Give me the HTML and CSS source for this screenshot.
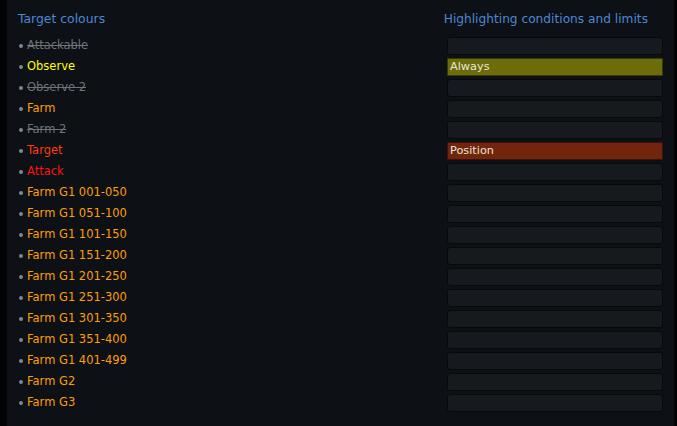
FILE: index.html
```html
<!DOCTYPE html>
<html>
<head>
<meta charset="utf-8">
<link rel="stylesheet" href="styles.css">
</head>
<body>
<div class="frame">
  <div class="panel">
    <div class="head">
      <div class="title">Target colours</div>
      <div class="title right">Highlighting conditions and limits</div>
    </div>
    <div class="rows">
      <div class="row"><span class="item off">Attackable</span><div class="box"></div></div>
      <div class="row"><span class="item c-observe">Observe</span><div class="box olive">Always</div></div>
      <div class="row"><span class="item off">Observe 2</span><div class="box"></div></div>
      <div class="row"><span class="item c-farm">Farm</span><div class="box"></div></div>
      <div class="row"><span class="item off">Farm 2</span><div class="box"></div></div>
      <div class="row"><span class="item c-target">Target</span><div class="box rust">Position</div></div>
      <div class="row"><span class="item c-attack">Attack</span><div class="box"></div></div>
      <div class="row"><span class="item c-farm">Farm G1 001-050</span><div class="box"></div></div>
      <div class="row"><span class="item c-farm">Farm G1 051-100</span><div class="box"></div></div>
      <div class="row"><span class="item c-farm">Farm G1 101-150</span><div class="box"></div></div>
      <div class="row"><span class="item c-farm">Farm G1 151-200</span><div class="box"></div></div>
      <div class="row"><span class="item c-farm">Farm G1 201-250</span><div class="box"></div></div>
      <div class="row"><span class="item c-farm">Farm G1 251-300</span><div class="box"></div></div>
      <div class="row"><span class="item c-farm">Farm G1 301-350</span><div class="box"></div></div>
      <div class="row"><span class="item c-farm">Farm G1 351-400</span><div class="box"></div></div>
      <div class="row"><span class="item c-farm">Farm G1 401-499</span><div class="box"></div></div>
      <div class="row"><span class="item c-farm">Farm G2</span><div class="box"></div></div>
      <div class="row"><span class="item c-farm">Farm G3</span><div class="box"></div></div>
    </div>
  </div>
</div>
</body>
</html>
```
FILE: styles.css
```css
html, body {
  margin: 0;
  padding: 0;
  background: #000;
  height: 100%;
}
.frame {
  display: flex;
  height: 426px;
  padding: 0 3px 0 7px;
  background: #020304;
  overflow: hidden;
}
.panel {
  flex: 1;
  background: #0d1015;
  padding: 0 11px 0 11px;
  font-family: "DejaVu Sans", Verdana, sans-serif;
}
.head {
  display: flex;
  justify-content: space-between;
  height: 35px;
  align-items: flex-start;
  padding-top: 11px;
  box-sizing: border-box;
}
.title {
  font-size: 12.4px;
  line-height: 16px;
  color: #4b88d6;
}
.title.right {
  margin-right: 15px;
  font-size: 12.2px;
}
.rows {
  display: flex;
  flex-direction: column;
}
.row {
  display: flex;
  align-items: center;
  justify-content: space-between;
  height: 21px;
}
.item {
  display: flex;
  align-items: center;
  font-size: 11.5px;
  line-height: 21px;
  padding-left: 1px;
}
.item::before {
  content: "";
  width: 4px;
  height: 4px;
  border-radius: 50%;
  background: #7d8894;
  margin-right: 4px;
  flex: none;
}
.off {
  color: #6f7378;
  text-decoration: line-through;
}
.c-observe { color: #ffff00; }
.c-farm { color: #ff9f00; }
.c-target { color: #ff3c0c; }
.c-attack { color: #ff1010; }
.box {
  width: 216px;
  height: 18px;
  box-sizing: border-box;
  margin-top: 0;
  margin-right: 0;
  background: #16191e;
  border: 1px solid #07090b;
  border-radius: 3px;
  font-size: 11.3px;
  line-height: 16px;
  padding-left: 2px;
  color: #e6e6d2;
}
.box.olive {
  background: #6d6c0a;
  border-color: #3a3a08;
  border-radius: 1px;
}
.box.rust {
  background: #72240d;
  border-color: #3c1407;
  border-radius: 1px;
}
```
